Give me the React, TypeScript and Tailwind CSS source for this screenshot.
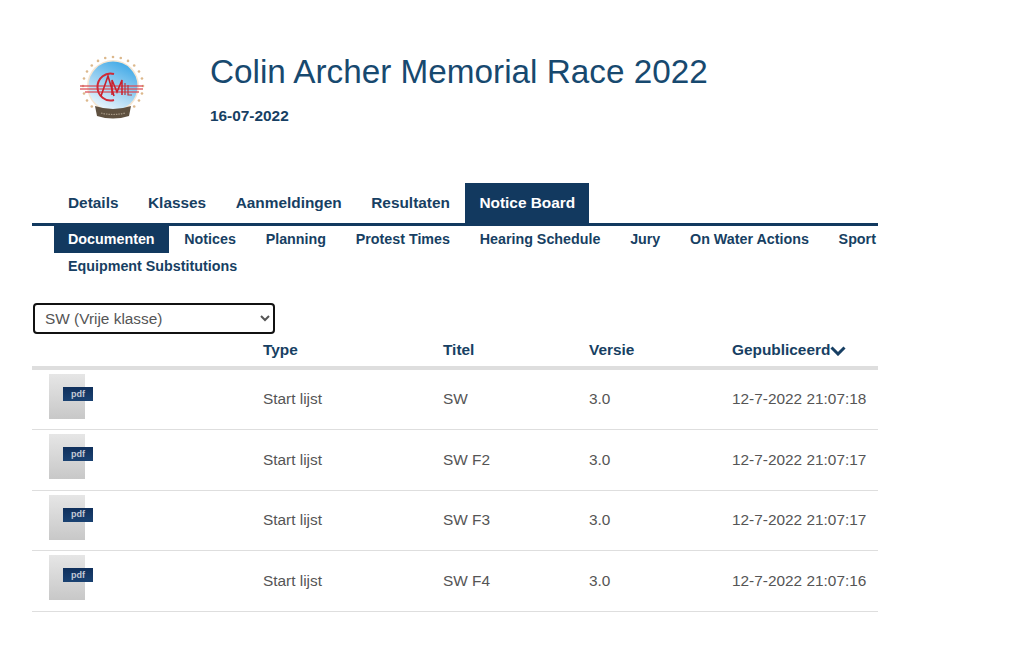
const F = "[font-family:'Liberation_Sans',Arial,sans-serif]";
const navy = "text-[#173f63]";

function Logo() {
  const dots = Array.from({ length: 24 }, (_, i) => {
    const a = (i / 24) * 2 * Math.PI - Math.PI / 2;
    return { x: 34 + 30 * Math.cos(a), y: 31 + 29 * Math.sin(a) };
  }).filter((d) => !(d.y > 50 && Math.abs(d.x - 34) < 20));
  return (
    <svg width="66" height="70" viewBox="0 0 66 70">
      <defs>
        <linearGradient id="lg" x1="0.8" y1="0" x2="0.3" y2="1">
          <stop offset="0" stopColor="#39a6e6" />
          <stop offset="0.55" stopColor="#9fd3f2" />
          <stop offset="1" stopColor="#eef7fc" />
        </linearGradient>
      </defs>
      {dots.map((d, i) => (
        <circle key={i} cx={d.x} cy={d.y} r="1.3" fill="#dcb88c" />
      ))}
      <circle cx="34" cy="31" r="26" fill="#f5e6d2" />
      <circle cx="34" cy="31" r="24.5" fill="url(#lg)" />
      <path d="M16 51 Q34 57 52 51 L50 61 Q34 66 18 61 Z" fill="#5f5140" />
      <path d="M22 58 Q34 61 46 58" fill="none" stroke="#a89a86" strokeWidth="1.2" strokeDasharray="1.5 1" />
      <path d="M1 31 H64 M1 34 H64 M6 37 H60" stroke="#dc4f58" strokeWidth="1.3" opacity="0.85" />
      <path d="M35 19 A13 13.5 0 1 0 35 45" fill="none" stroke="#d02a36" strokeWidth="2" />
      <path d="M22 41 L29 21 L35 41" fill="none" stroke="#c9202c" strokeWidth="1.6" />
      <path d="M33 40 V25 L38 37 L43 25 V40" fill="none" stroke="#c9202c" strokeWidth="1.5" />
      <path d="M46 28 V40 M49 30 V40 H53" fill="none" stroke="#b8373f" strokeWidth="1.2" />
    </svg>
  );
}

function PdfIcon() {
  return (
    <div className="relative w-[36px] h-[45px] bg-gradient-to-b from-[#e6e6e6] to-[#c8c8c8]">
      <div className="absolute left-[14px] top-[13px] w-[30px] h-[14px] bg-gradient-to-b from-[#10305c] to-[#1a4272] flex items-center justify-center text-[9px] font-bold text-[#c4cbd6] leading-none">
        pdf
      </div>
    </div>
  );
}

const tabs = ["Details", "Klasses", "Aanmeldingen", "Resultaten", "Notice Board"];
const subs = ["Documenten", "Notices", "Planning", "Protest Times", "Hearing Schedule", "Jury", "On Water Actions", "Sport", "Equipment Substitutions"];
const rows = [
  ["SW", "12-7-2022 21:07:18"],
  ["SW F2", "12-7-2022 21:07:17"],
  ["SW F3", "12-7-2022 21:07:17"],
  ["SW F4", "12-7-2022 21:07:16"],
];
const cols = "grid grid-cols-[231px_180px_146px_143px_146px]";

export default function App() {
  return (
    <div className={`${F} w-[1024px] h-[670px] bg-white overflow-hidden pl-[32px]`}>
      <div className="w-[846px]">
        <div className="flex h-[183px]">
          <div className="w-[178px] pl-[47px] pt-[55px]">
            <Logo />
          </div>
          <div>
            <h1 className="mt-[52px] text-[33.3px] leading-[40px] text-[#17496f] whitespace-nowrap">Colin Archer Memorial Race 2022</h1>
            <div className={`mt-[14px] text-[15.4px] leading-[20px] font-bold ${navy}`}>16-07-2022</div>
          </div>
        </div>

        <div className="flex pl-[22px] border-b-[3px] border-[#12395f] h-[43px]">
          {tabs.map((t, i) => (
            <div
              key={t}
              className={`px-[14px] mr-[1.5px] h-[40px] pt-[10px] text-[15.4px] leading-[20px] font-bold whitespace-nowrap ${i === 4 ? "bg-[#12395f] text-white" : navy}`}
            >
              {t}
            </div>
          ))}
        </div>

        <div className="flex flex-wrap pl-[22px] w-[870px] h-[53px] overflow-hidden">
          {subs.map((t, i) => (
            <div
              key={t}
              className={`px-[14px] mr-[1.7px] h-[26.5px] pt-[4px] text-[14.3px] leading-[18px] font-bold whitespace-nowrap ${i === 0 ? "bg-[#12395f] text-white" : navy}`}
            >
              {t}
            </div>
          ))}
        </div>

        <div className="mt-[24px] ml-[1px]">
          <select className="w-[242px] h-[31px] pl-[6px] rounded-[4px] border-2 border-[#111] bg-white text-[15.4px] text-[#555]">
            <option>SW (Vrije klasse)</option>
          </select>
        </div>

        <div className={`${cols} h-[36px] border-b-4 border-[#dedede] text-[15.4px] font-bold ${navy} leading-[32px]`}>
          <div />
          <div>Type</div>
          <div>Titel</div>
          <div>Versie</div>
          <div className="flex items-center h-[32px]">
            Gepubliceerd
            <svg width="16" height="10" viewBox="0 0 16 10" className="mt-[1px]" fill="none" stroke="#173f63" strokeWidth="3">
              <path d="M1.5 1.5 L8 8 L14.5 1.5" />
            </svg>
          </div>
        </div>

        {rows.map(([t, d]) => (
          <div key={t} className={`${cols} h-[60.4px] pb-[1.5px] border-b border-[#dedede] items-center text-[15.4px] text-[#555]`}>
            <div className="pl-[17px] self-start pt-[4px]">
              <PdfIcon />
            </div>
            <div>Start lijst</div>
            <div>{t}</div>
            <div>3.0</div>
            <div className="whitespace-nowrap">{d}</div>
          </div>
        ))}
      </div>
    </div>
  );
}
